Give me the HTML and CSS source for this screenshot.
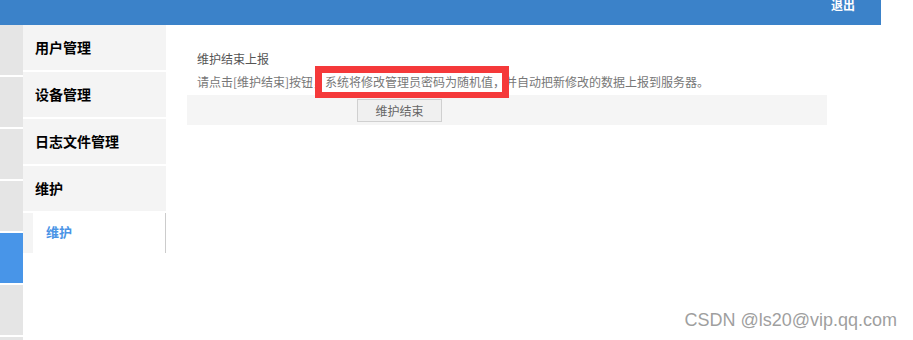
FILE: index.html
```html
<!DOCTYPE html>
<html lang="zh-CN">
<head>
  <meta charset="UTF-8">
  <title>维护</title>
  <link rel="stylesheet" href="styles.css">
</head>
<body>

  <div class="topbar">
    <a href="#" class="logout">退出</a>
  </div>

  <div class="main">
    <div class="rail">
      <div class="rail-item"></div>
      <div class="rail-item"></div>
      <div class="rail-item"></div>
      <div class="rail-item"></div>
      <div class="rail-item active"></div>
      <div class="rail-item"></div>
      <div class="rail-item short"></div>
    </div>

    <div class="menu">
      <div class="menu-item">用户管理</div>
      <div class="menu-item">设备管理</div>
      <div class="menu-item">日志文件管理</div>
      <div class="menu-item">维护</div>
      <div class="submenu">
        <div class="submenu-item">维护</div>
      </div>
    </div>

    <div class="content">
      <h3 class="panel-title">维护结束上报</h3>
      <p class="panel-desc">请点击[维护结束]按钮，系统将修改管理员密码为随机值，并自动把新修改的数据上报到服务器。</p>
      <div class="panel-actions">
        <button type="button" class="btn">维护结束</button>
      </div>
      <div class="mark"></div>
    </div>
  </div>

  <div class="watermark">CSDN @ls20@vip.qq.com</div>

</body>
</html>
```

FILE: styles.css
```css
html, body {
  margin: 0;
  height: 340px;
  overflow: hidden;
  background: #fff;
  font-family: "Noto Sans CJK SC", "DejaVu Sans", sans-serif;
  font-size: 12px;
}
.topbar {
  width: 881px;
  height: 25px;
  background: #3b82c9;
  display: flex;
  justify-content: flex-end;
  overflow: hidden;
}
.logout {
  color: #fff;
  font-weight: bold;
  font-size: 12px;
  line-height: 12px;
  margin: -1px 26px 0 0;
  text-decoration: none;
}
.main {
  display: flex;
  align-items: flex-start;
}
.rail {
  width: 23px;
  display: flex;
  flex-direction: column;
  gap: 2px;
}
.rail-item {
  height: 50px;
  background: #e5e5e5;
}
.rail-item.active {
  background: #4895e8;
}
.rail-item.short {
  height: 3px;
}
.menu {
  width: 143px;
  background: #f4f4f4;
}
.menu-item {
  height: 45px;
  line-height: 45px;
  padding-left: 12px;
  border-bottom: 2px solid #fff;
  font-size: 14px;
  font-weight: bold;
  color: #000;
}
.submenu {
  padding-left: 10px;
}
.submenu-item {
  height: 40px;
  line-height: 38px;
  padding-left: 13px;
  background: #fff;
  border-right: 1px solid #ccc;
  color: #4a94e6;
  font-size: 13px;
  font-weight: bold;
}
.content {
  position: relative;
  padding: 24px 0 0 21px;
}
.panel-title {
  margin: 0 0 3px;
  padding-left: 10px;
  font-size: 12px;
  font-weight: normal;
  line-height: 20px;
  color: #555;
}
.panel-desc {
  margin: 0 0 3px;
  padding-left: 10px;
  line-height: 20px;
  color: #777;
  white-space: nowrap;
}
.panel-actions {
  width: 640px;
  height: 30px;
  background: #f5f5f5;
  display: flex;
  align-items: center;
  padding-left: 170px;
  box-sizing: border-box;
}
.btn {
  width: 85px;
  height: 23px;
  padding: 0;
  background: #f0f0f0;
  border: 1px solid #d0d0d0;
  color: #666;
  font-family: inherit;
  font-size: 12px;
}
/* annotation frame drawn over the text */
.mark {
  position: absolute;
  left: 149px;
  top: 41px;
  width: 180px;
  height: 19px;
  border: 7px solid #f5393a;
  border-bottom-width: 6px;
}
.watermark {
  position: absolute;
  right: 16px;
  top: 310px;
  font-family: "Liberation Sans", Arial, sans-serif;
  font-size: 18px;
  line-height: 20px;
  color: #9f9f9f;
}
```
